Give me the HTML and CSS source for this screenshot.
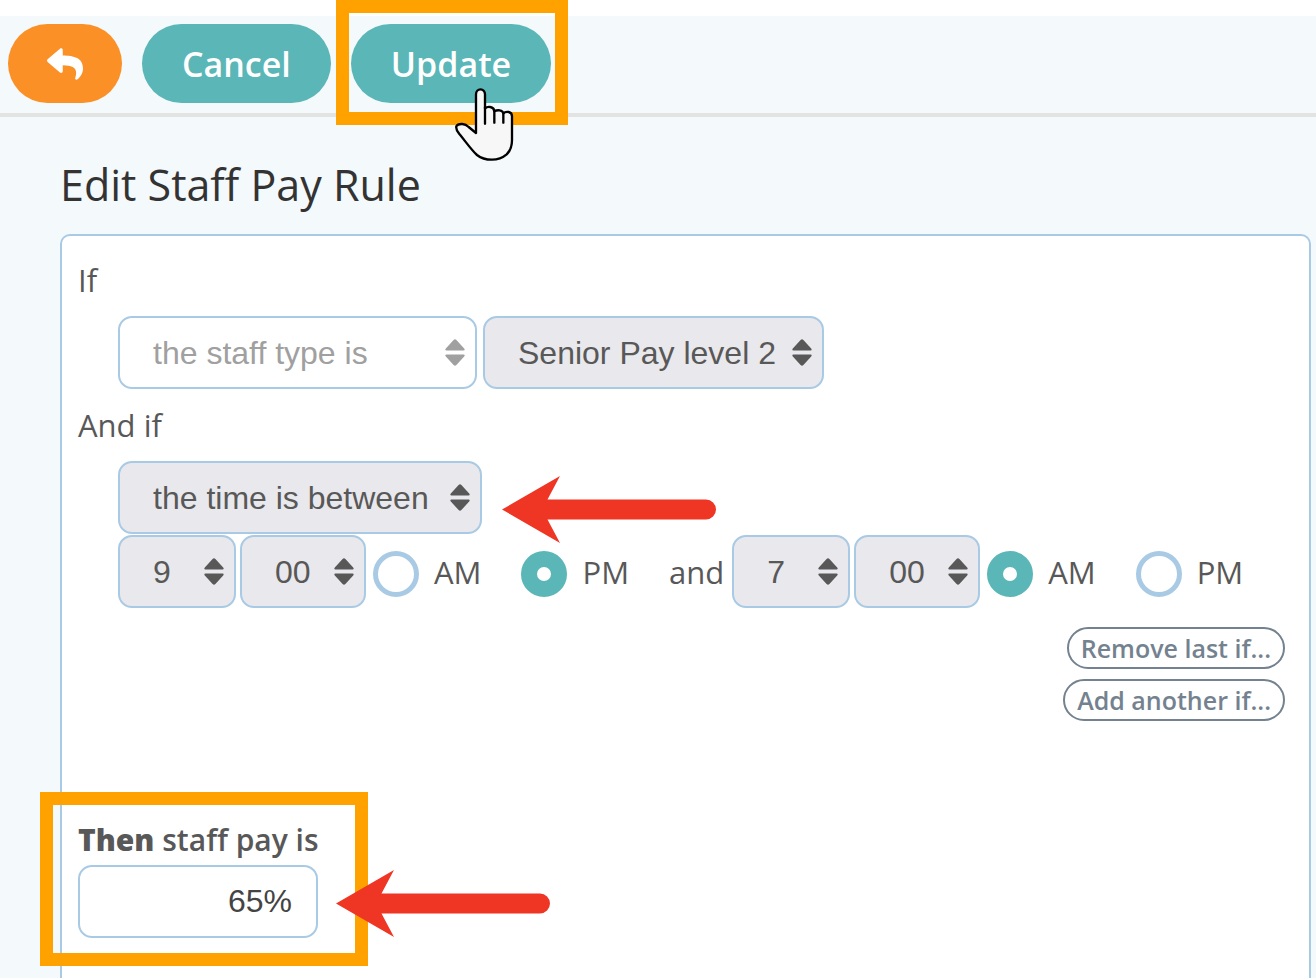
FILE: index.html
```html
<!DOCTYPE html>
<html lang="en">
<head>
  <meta charset="UTF-8">
  <meta name="viewport" content="width=device-width, initial-scale=1">
  <title>Edit Staff Pay Rule</title>
  <link rel="stylesheet" href="styles.css">
</head>
<body>
  <svg class="sprite" aria-hidden="true">
    <symbol id="sort" viewBox="0 0 20 27">
      <path d="M1.5 11.5Q-.5 11.500.800 9.600L8.600 1Q10 -.6 11.400 1L19.200 9.600Q20.500 11.500 18.500 11.500ZM1.500 15.500H18.500Q20.500 15.500 19.200 17.400L11.400 26Q10 27.600 8.600 26L.8 17.400Q-.5 15.500 1.500 15.500Z"/>
    </symbol>
    <symbol id="arrow" viewBox="0 0 214 67">
      <path d="M0 33.500 58 0 45.500 23.500H204a10 10 0 0 1 0 20H45.500L58 67Z"/>
    </symbol>
  </svg>

  <header class="toolbar">
    <button type="button" class="btn btn-back" aria-label="Back">
      <svg viewBox="0 0 512 512"><path d="M8.309 189.836L184.313 37.851C199.719 24.546 224 35.347 224 56.015v80.053c160.629 1.839 288 34.032 288 186.258 0 61.441-39.581 122.309-83.333 154.132-13.653 9.931-33.111-2.533-28.077-18.631 45.344-145.012-21.507-183.510-176.590-185.742V360c0 20.700-24.300 31.453-39.687 18.164l-176.004-152c-11.071-9.562-11.086-26.753 0-36.328z"/></svg>
    </button>
    <button type="button" class="btn">Cancel</button>
    <div class="update">
      <button type="submit" form="rule" class="btn">Update</button>
      <span class="highlight"></span>
      <svg class="cursor" viewBox="369 261 186 225">
        <path d="M438 399V283a13.500 15 0 0 1 27 0V325Q472 319 481 321Q492 323 493 334Q500 330 509 331Q519 333 520 340Q526 334 536 336Q546 338 546 349V420Q546 448 530 463Q511 479 486 479Q458 479 441 465C425 451 405 422 388 402Q377 389 379 379Q383 371 397 372Q408 373 416 381Z"/>
        <path d="M465 322V371M493 332V368M520 340V368"/>
      </svg>
    </div>
  </header>

  <main>
    <h1>Edit Staff Pay Rule</h1>
    <form id="rule" class="panel">
      <p>If</p>
      <div class="conditions">
        <div class="row">
          <span class="select type"><select aria-label="First condition" disabled><option>the staff type is</option></select><svg><use href="#sort"/></svg></span>
          <span class="select level"><select aria-label="Staff type"><option>Senior Pay level 2</option></select><svg><use href="#sort"/></svg></span>
        </div>
      </div>
      <p>And if</p>
      <div class="conditions">
        <div class="row">
          <span class="select between"><select aria-label="Second condition"><option>the time is between</option></select><svg><use href="#sort"/></svg></span>
          <div class="pointer"><svg class="arrow"><use href="#arrow"/></svg></div>
        </div>
        <div class="row time">
          <span class="select hour"><select aria-label="Start hour"><option>9</option></select><svg><use href="#sort"/></svg></span>
          <span class="select minute"><select aria-label="Start minute"><option>00</option></select><svg><use href="#sort"/></svg></span>
          <div class="ampm">
            <label><input type="radio" name="start">AM</label>
            <label><input type="radio" name="start" checked>PM</label>
          </div>
          <span class="and">and</span>
          <span class="select hour"><select aria-label="End hour"><option>7</option></select><svg><use href="#sort"/></svg></span>
          <span class="select minute"><select aria-label="End minute"><option>00</option></select><svg><use href="#sort"/></svg></span>
          <div class="ampm">
            <label><input type="radio" name="end" checked>AM</label>
            <label><input type="radio" name="end">PM</label>
          </div>
        </div>
      </div>
      <div class="actions">
        <button type="button">Remove last if...</button>
        <button type="button">Add another if...</button>
      </div>
      <div class="result">
        <label for="pay"><b>Then</b> staff pay is</label>
        <input type="text" id="pay" value="65%">
        <span class="highlight"></span>
        <svg class="arrow"><use href="#arrow"/></svg>
      </div>
    </form>
  </main>
</body>
</html>
```
FILE: styles.css
```css
* { box-sizing: border-box; }
body {
  margin: 0;
  padding-top: 16px;
  min-height: 100vh;
  display: flex;
  flex-direction: column;
  background: #fff;
  color: #585858;
  font-family: "Open Sans", "Noto Sans", sans-serif;
  font-size: 31px;
}
button, input, select { font: inherit; color: inherit; margin: 0; }
.sprite { position: absolute; width: 0; height: 0; }

/* toolbar */
.toolbar {
  display: flex;
  gap: 20px;
  padding: 8px 8px 10px;
  background: #f4f9fc;
  border-bottom: 4px solid #e3e3e1;
}
.btn {
  height: 79px;
  padding: 0 40px;
  border: none;
  border-radius: 40px;
  background: #5ab6b7;
  color: #fff;
  font-size: 34px;
  font-weight: 600;
  cursor: pointer;
}
.btn-back { width: 114px; padding: 0; background: #fa9026; }
.btn-back svg { display: block; width: 36px; height: 36px; margin: 0 auto; fill: #fff; }
.update { position: relative; }
.highlight {
  position: absolute;
  border: 13px solid #ffa200;
  pointer-events: none;
}
.update .highlight { top: -24px; right: -17px; bottom: -22px; left: -15px; }
.cursor {
  position: absolute;
  top: 63px;
  left: 102px;
  width: 62px;
  height: 75px;
  fill: #f7f7f7;
  stroke: #000;
  stroke-width: 7;
  stroke-linecap: round;
  stroke-linejoin: round;
  pointer-events: none;
}

main {
  flex: 1;
  display: flex;
  flex-direction: column;
  padding: 36px 5px 0 60px;
  background: #f4f9fc;
}
h1 {
  margin: 0 0 17px;
  color: #333;
  font-size: 43px;
  font-weight: 400;
  line-height: 64px;
}
.panel {
  flex: 1;
  padding: 8px 24px 0 16px;
  background: #fff;
  border: 2px solid #a9cae4;
  border-bottom: none;
  border-radius: 10px 10px 0 0;
}
p { margin: 0; line-height: 72px; }
.conditions { display: flex; flex-direction: column; gap: 1px; padding-left: 40px; }
.row { display: flex; align-items: center; gap: 6px; }
.time { gap: 4px; }

/* form controls */
.select { position: relative; }
.select select {
  display: block;
  appearance: none;
  width: 100%;
  height: 73px;
  padding: 0 36px 0 33px;
  border: 2px solid #a9cae4;
  border-radius: 14px;
  background: #e9e8ec;
  font-family: "Liberation Sans", Arial, sans-serif;
  font-size: 32px;
}
.select select:disabled { background: #fff; color: #a0a0a0; opacity: 1; }
.select svg {
  position: absolute;
  top: 23px;
  right: 12px;
  width: 20px;
  height: 27px;
  fill: #585858;
  pointer-events: none;
}
.select select:disabled + svg { fill: #a0a0a0; }
.type { width: 359px; }
.level { width: 341px; }
.between { width: 364px; }
.hour { width: 118px; }
.minute { width: 126px; }
.ampm { display: flex; gap: 40px; margin-left: 3px; }
.ampm label { display: flex; align-items: center; gap: 15px; }
.ampm input {
  appearance: none;
  width: 46px;
  height: 46px;
  margin-top: 4px;
  border: 5px solid #a9cae4;
  border-radius: 50%;
  background: #fff;
}
.ampm input:checked { border: 16px solid #5ab6b7; }
.and { margin: 0 4px 0 36px; }

.actions {
  display: flex;
  flex-direction: column;
  align-items: flex-end;
  gap: 10px;
  margin-top: 19px;
}
.actions button {
  height: 42px;
  padding: 0 12px;
  border: 2px solid #74828f;
  border-radius: 21px;
  background: #fff;
  color: #74828f;
  font-size: 25px;
  font-weight: 600;
  line-height: 38px;
  cursor: pointer;
}

/* result */
.result { position: relative; width: 240px; margin-top: 94px; }
.result label {
  display: block;
  font-size: 30px;
  font-weight: 600;
  line-height: 50px;
  white-space: nowrap;
}
.result b { font-weight: 800; }
.result input {
  display: block;
  width: 100%;
  height: 73px;
  padding: 0 24px;
  border: 2px solid #a9cae4;
  border-radius: 14px;
  background: #fff;
  color: #444;
  font-family: "Liberation Sans", Arial, sans-serif;
  font-size: 32px;
  text-align: right;
}
.result .highlight { top: -23px; right: -50px; bottom: -28px; left: -38px; }
.pointer { position: relative; align-self: stretch; }
.arrow {
  position: absolute;
  width: 214px;
  height: 67px;
  fill: #ef3524;
  pointer-events: none;
}
.pointer .arrow { top: 15px; left: 14px; }
.result .arrow { top: 55px; left: 258px; }
```
